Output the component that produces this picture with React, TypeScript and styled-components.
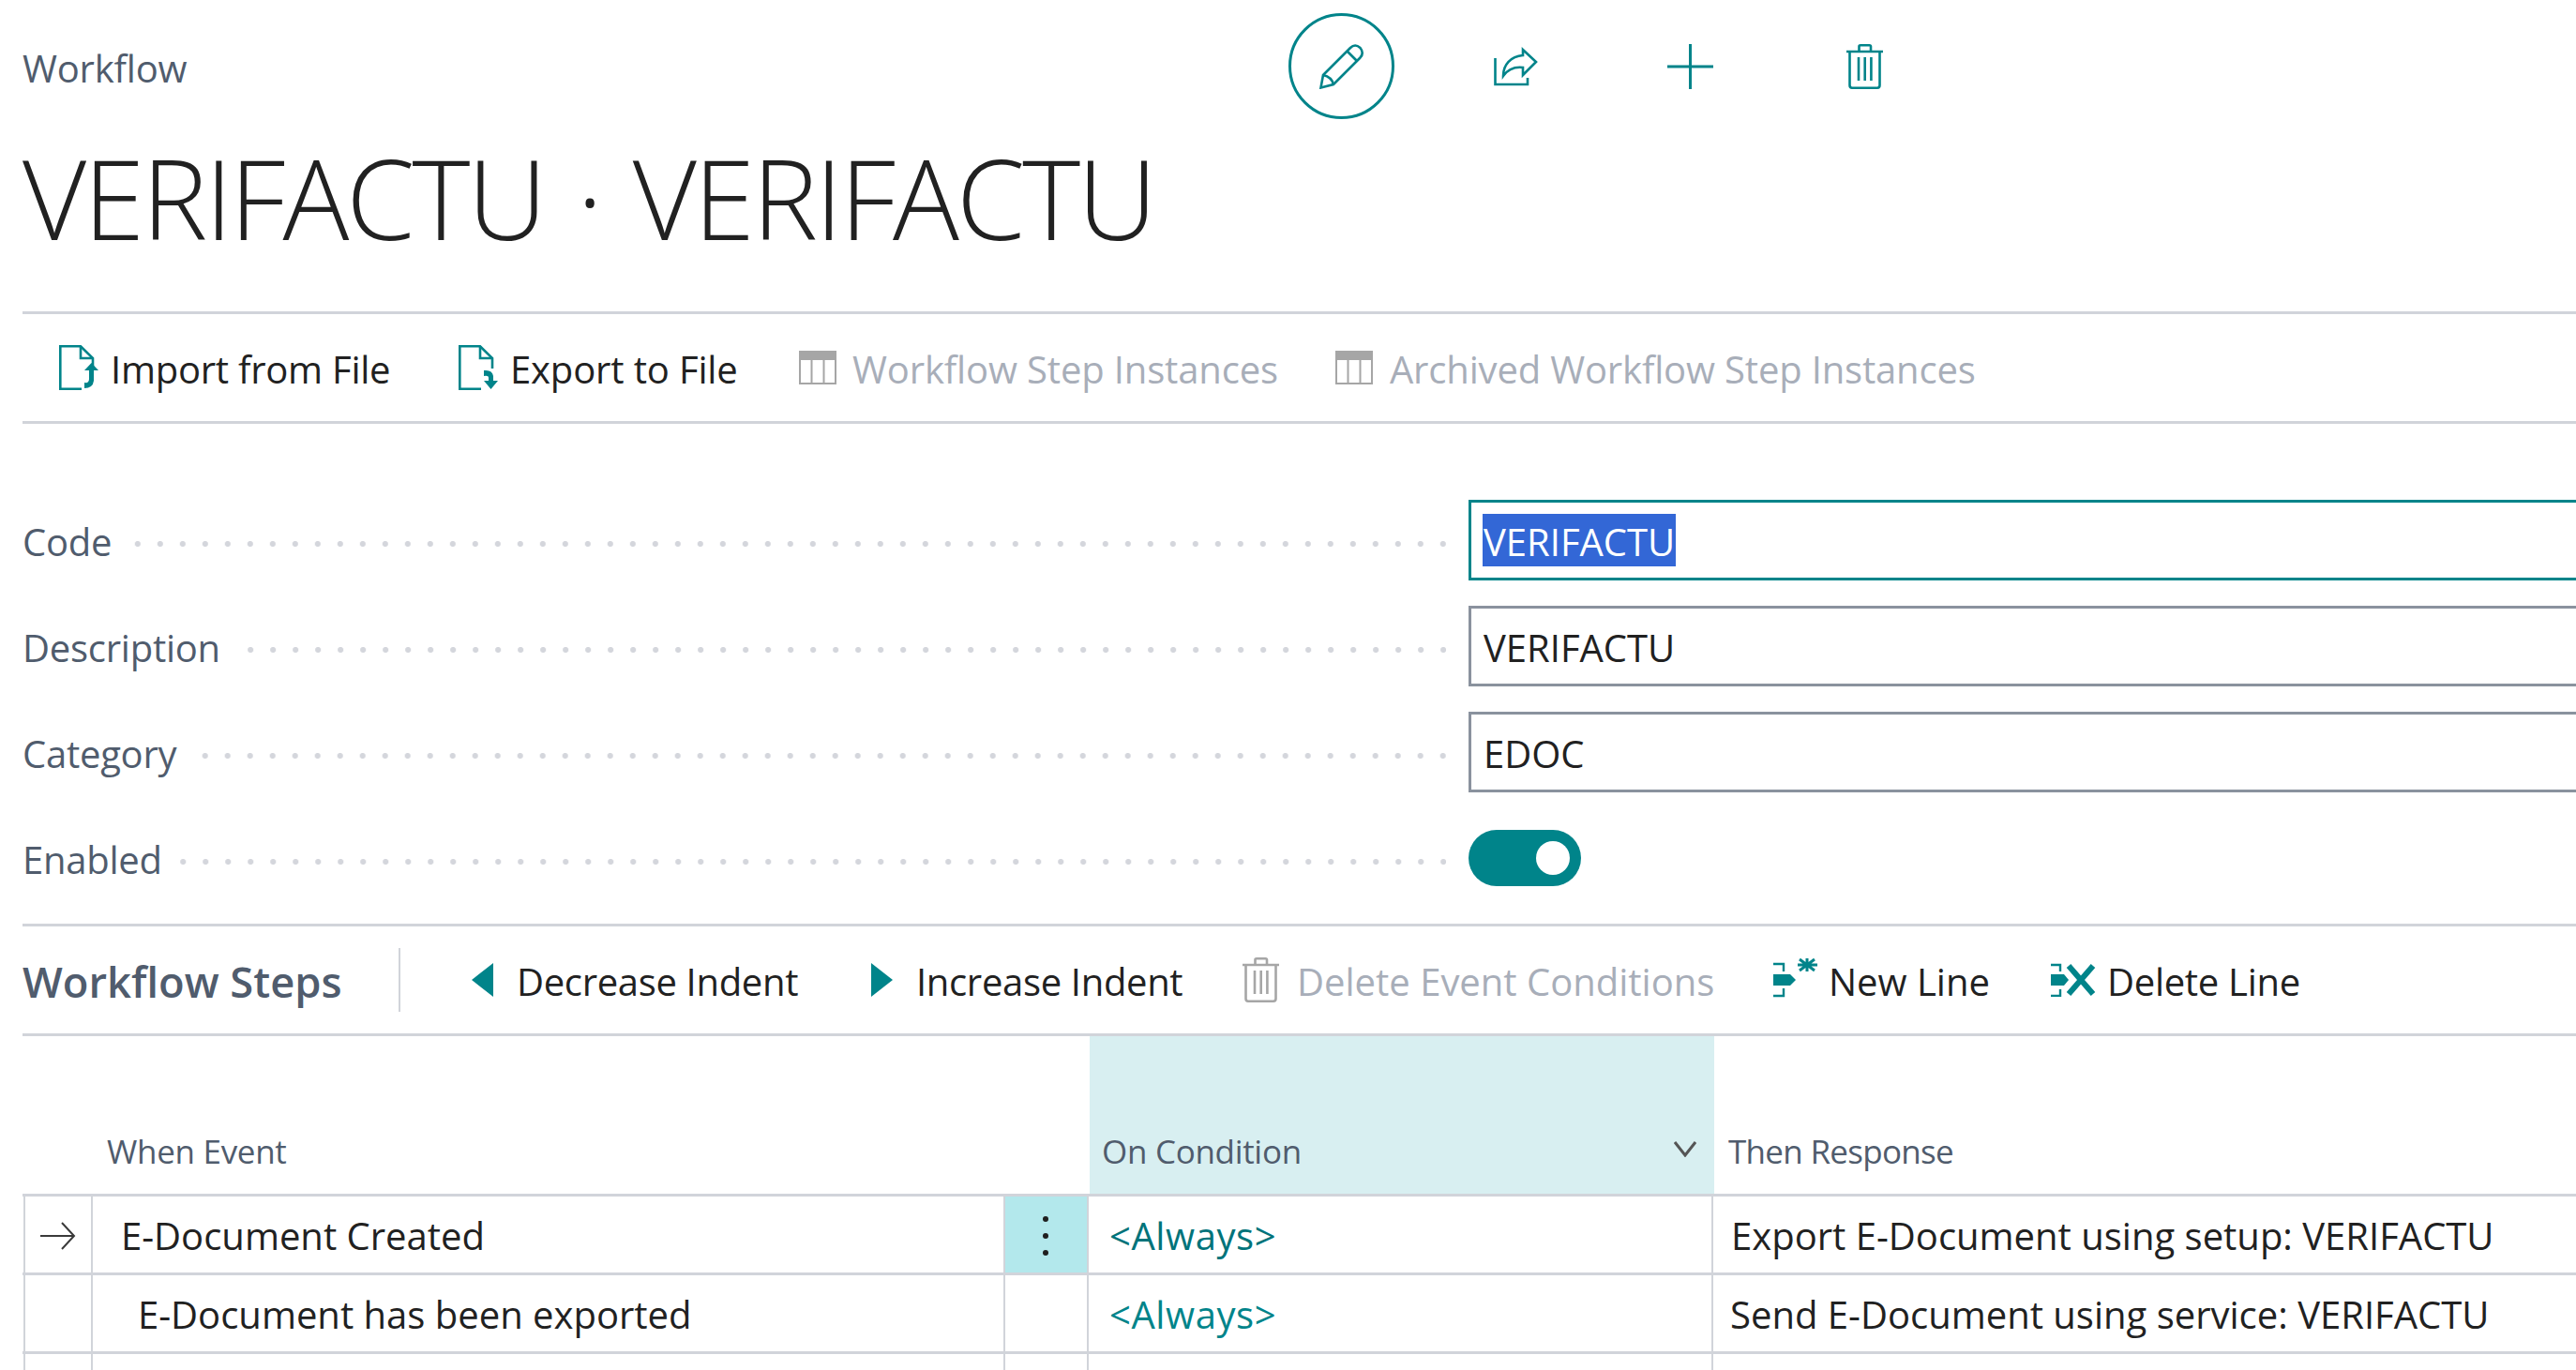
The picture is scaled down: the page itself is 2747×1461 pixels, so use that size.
import * as React from "react"
import styled, { createGlobalStyle } from "styled-components"

const TEAL = "#00848a"
const LINE = "#d1d4da"
const MUTED = "#505c6d"
const INK = "#212121"
const DISABLED = "#a8aeb9"

const GlobalStyle = createGlobalStyle`
  html, body {
    margin: 0;
    padding: 0;
    background: #fff;
  }
  body {
    font-family: "Open Sans", "Noto Sans", sans-serif;
    color: ${INK};
  }
`

const Page = styled.div`
  width: 2747px;
  height: 1461px;
  padding-left: 24px;
  box-sizing: border-box;
  overflow: hidden;
`

const TopRow = styled.div`
  display: flex;
  align-items: center;
  padding-top: 14px;
`

const Caption = styled.div`
  flex: 0 0 1350px;
  font-size: 40px;
  line-height: 54px;
  letter-spacing: -0.2px;
  color: ${MUTED};
  padding-top: 4px;
`

const Actions = styled.div`
  display: flex;
  gap: 73px;
`

const ActionButton = styled.div<{ $ring?: boolean }>`
  width: 113px;
  height: 113px;
  box-sizing: border-box;
  border-radius: 50%;
  border: 3px solid ${({ $ring }) => ($ring ? TEAL : "transparent")};
  display: flex;
  align-items: center;
  justify-content: center;
`

const Title = styled.h1`
  margin: 14px 0 51px;
  font-size: 118px;
  font-weight: 300;
  line-height: 140px;
  letter-spacing: -3px;
  word-spacing: 7px;
  color: ${INK};
`

const Toolbar = styled.div`
  display: flex;
  align-items: center;
  height: 114px;
  border-top: 3px solid ${LINE};
`

const ActionBar = styled(Toolbar)`
  padding-left: 39px;
  border-bottom: 3px solid ${LINE};
`

const StepsBar = styled(Toolbar)``

const ToolItem = styled.div<{ $width?: number; $gap: number; $disabled?: boolean; $spacing?: number }>`
  flex: 0 0 ${({ $width }) => ($width ? `${$width}px` : "auto")};
  display: flex;
  align-items: center;
  gap: ${({ $gap }) => $gap}px;
  font-size: 40px;
  line-height: 54px;
  letter-spacing: ${({ $spacing }) => $spacing ?? 0}px;
  color: ${({ $disabled }) => ($disabled ? DISABLED : INK)};
  white-space: nowrap;
`

const ToolLabel = styled.span`
  margin-top: 4px;
`

const SectionTitle = styled.h2`
  flex: 0 0 401px;
  margin: 0;
  font-size: 45.3px;
  font-weight: 600;
  line-height: 60px;
  color: ${MUTED};
  padding-top: 4px;
  box-sizing: border-box;
`

const Divider = styled.div`
  flex: 0 0 2px;
  height: 68px;
  margin-right: 76px;
  background: ${LINE};
`

const Form = styled.div`
  display: flex;
  flex-direction: column;
  gap: 27px;
  padding: 81px 0 27px;
`

const FormRow = styled.div`
  display: grid;
  grid-template-columns: 1518px 1fr;
  column-gap: 24px;
  height: 86px;
  align-items: center;
`

const LabelCell = styled.div`
  display: flex;
  align-items: center;
`

const Label = styled.div`
  font-size: 40px;
  line-height: 54px;
  letter-spacing: -0.25px;
  color: ${MUTED};
  white-space: nowrap;
  padding-top: 4px;
`

const Leader = styled.div`
  flex: 1;
  height: 6px;
  margin: 8px 0 0 12px;
  background-image: radial-gradient(circle 3px, #d4d6dc 96%, transparent 100%);
  background-size: 24px 6px;
  background-position: right -9px center;
  background-repeat: repeat-x;
`

const Field = styled.div<{ $focused?: boolean }>`
  height: 86px;
  box-sizing: border-box;
  border: 3px solid ${({ $focused }) => ($focused ? TEAL : "#8a929e")};
  border-right: none;
  padding: ${({ $focused }) => ($focused ? "0 0 0 12px" : "3px 0 0 13px")};
  display: flex;
  align-items: center;
  font-size: 40px;
  line-height: 56px;
  color: ${INK};
`

const Selected = styled.span`
  display: inline-block;
  height: 56px;
  line-height: 59px;
  padding: 0 1px;
  background: #3367d6;
  color: #fff;
`

const Toggle = styled.div`
  width: 120px;
  height: 60px;
  border-radius: 30px;
  background: ${TEAL};
  display: flex;
  align-items: center;
  justify-content: flex-end;
  padding-right: 12px;
  box-sizing: border-box;
`

const Knob = styled.div`
  width: 36px;
  height: 36px;
  border-radius: 50%;
  background: #fff;
`

const HeaderRow = styled.div`
  display: grid;
  grid-template-columns: 1136px 668px 1fr;
  height: 168px;
  border-top: 3px solid ${LINE};
  border-bottom: 3px solid ${LINE};
`

const HeaderCell = styled.div<{ $active?: boolean; $pad: number; $spacing?: number }>`
  position: relative;
  display: flex;
  align-items: flex-end;
  padding: 0 0 21px ${({ $pad }) => $pad}px;
  font-size: 35px;
  line-height: 48px;
  letter-spacing: ${({ $spacing }) => $spacing ?? -0.3}px;
  color: ${MUTED};
  border-left: 2px solid transparent;
  background: ${({ $active }) => ($active ? "#d8eff1" : "transparent")};
  background-clip: padding-box;
`

const SortMark = styled.div`
  position: absolute;
  right: 19px;
  bottom: 39px;
  display: flex;
`

const Row = styled.div`
  display: grid;
  grid-template-columns: 72px 973px 89px 666px 1fr;
  height: 81px;
  padding-left: 1px;
  border-bottom: 3px solid ${LINE};
`

const Cell = styled.div<{ $pad?: number; $menu?: boolean; $link?: boolean; $dark?: boolean }>`
  display: flex;
  align-items: center;
  box-sizing: border-box;
  border-left: 2px solid ${LINE};
  padding: 2px 0 0 ${({ $pad }) => $pad ?? 0}px;
  font-size: 40px;
  line-height: 54px;
  letter-spacing: ${({ $link }) => ($link ? 0.6 : 0)}px;
  white-space: nowrap;
  background: ${({ $menu }) => ($menu ? "#b3e8ec" : "transparent")};
  color: ${({ $link, $dark }) => ($link ? ($dark ? "#00737a" : TEAL) : INK)};
`

const RowMark = styled(Cell)`
  justify-content: center;
`

const Kebab = styled.div`
  display: flex;
  flex-direction: column;
  gap: 12px;
  margin: 0 auto;
  transform: translateX(-1px);
`

const KebabDot = styled.span`
  width: 6px;
  height: 6px;
  border-radius: 50%;
  background: #1f1f1f;
`

const PencilIcon = () => (
  <svg width="48" height="48" viewBox="0 0 48 48" fill="none" stroke={TEAL} strokeWidth="2.6">
    <path d="M4 33 L33 4 Q38 -1 43.5 4 Q48 9.5 43.5 14.5 L15 43 L1.5 46.5 Z" />
    <path d="M29.5 7.5 L40 18" />
    <path d="M4 33 Q13 35 15 43" />
  </svg>
)

const ShareIcon = () => (
  <svg width="47" height="42" viewBox="0 0 47 42" fill="none" stroke={TEAL} strokeWidth="2.6">
    <path d="M1.5 12 V40 H36 V33" />
    <path d="M31 3 L45 16 L31 30 L31 22 C22 21 15 24 10 31 C10 19 18 10 31 9 Z" />
  </svg>
)

const PlusIcon = () => (
  <svg width="49" height="48" viewBox="0 0 49 48" fill="none" stroke={TEAL} strokeWidth="3">
    <path d="M24.5 0 V48 M0 24 H49" />
  </svg>
)

const TrashIcon = ({ color = TEAL }: { color?: string }) => (
  <svg width="39" height="48" viewBox="0 0 39 48" fill="none" stroke={color} strokeWidth="2.6">
    <path d="M0 8 H39" />
    <path d="M13.5 7 V2.5 Q13.5 1.3 15 1.3 H24.5 Q26 1.3 26 2.5 V7" />
    <path d="M3.5 8 V44 Q3.5 46.7 6 46.7 H33 Q35.5 46.7 35.5 44 V8" />
    <path d="M13 14 V39 M19.7 14 V39 M26.4 14 V39" />
  </svg>
)

const FileIcon = ({ up }: { up?: boolean }) => (
  <svg width="42" height="48" viewBox="0 0 42 48" fill="none" stroke={TEAL} strokeWidth="2.6">
    <path d="M24 46.7 H1.3 V1.3 H23 L36 14 V25" />
    <path d="M23 1.3 V14 H36" />
    {up ? (
      <path d="M27 27 L34.5 19 L42 27 H37 V38 Q36 46 27 46 L27 40 Q32 41 32 36 V27 Z" fill={TEAL} stroke="none" />
    ) : (
      <path d="M27 27 Q36 26 37 33 V38 H42 L34.5 47 L27 38 H32 V35 Q32 32 27 33 Z" fill={TEAL} stroke="none" />
    )}
  </svg>
)

const ColumnsIcon = () => (
  <svg width="40" height="36" viewBox="0 0 40 36" fill="none" stroke="#a6a6a6" strokeWidth="2">
    <rect x="0" y="0" width="40" height="10" fill="#a6a6a6" stroke="none" />
    <path d="M1 9 V35 H39 V9 M13.5 9 V35 M26.5 9 V35" />
  </svg>
)

const TriangleIcon = ({ flip }: { flip?: boolean }) => (
  <svg width="23" height="36" viewBox="0 0 23 36" fill={TEAL}>
    <path d={flip ? "M0 0 L23 18 L0 36 Z" : "M23 0 L0 18 L23 36 Z"} />
  </svg>
)

const NewLineIcon = () => (
  <svg width="50" height="48" viewBox="0 0 50 48" fill="none" stroke={TEAL} strokeWidth="2.4">
    <path d="M0 7 H11 V15 M0 41 H11 V33" />
    <path d="M0 18 H18 L24 24 L18 30 H0 Z" fill={TEAL} stroke="none" />
    <path d="M36 1 V15 M28 2 L44 14 M44 2 L28 14 M26 8 H47" strokeWidth="3" />
  </svg>
)

const DeleteLineIcon = () => (
  <svg width="48" height="36" viewBox="0 0 48 36" fill="none" stroke={TEAL} strokeWidth="2.4">
    <path d="M0 2 H10 V9 M0 35 H10 V28" />
    <path d="M0 12 H14 L19 18 L14 24 H0 Z" fill={TEAL} stroke="none" />
    <path d="M19 3 L45 33 M45 3 L19 33" strokeWidth="6" />
  </svg>
)

const ArrowIcon = () => (
  <svg width="38" height="30" viewBox="0 0 38 30" fill="none" stroke="#3a3a3a" strokeWidth="2">
    <path d="M0 15 H36 M23 1 L36 15 L23 29" />
  </svg>
)

const ChevronIcon = () => (
  <svg width="24" height="17" viewBox="0 0 24 17" fill="none" stroke="#555" strokeWidth="3">
    <path d="M1 1 L12 15 L23 1" />
  </svg>
)

const App = () => (
  <Page>
    <GlobalStyle />
    <TopRow>
      <Caption>Workflow</Caption>
      <Actions>
        <ActionButton $ring>
          <PencilIcon />
        </ActionButton>
        <ActionButton>
          <ShareIcon />
        </ActionButton>
        <ActionButton>
          <PlusIcon />
        </ActionButton>
        <ActionButton>
          <TrashIcon />
        </ActionButton>
      </Actions>
    </TopRow>
    <Title>VERIFACTU · VERIFACTU</Title>

    <ActionBar>
      <ToolItem $width={426} $gap={13} $spacing={-0.25}>
        <FileIcon up />
        <ToolLabel>Import from File</ToolLabel>
      </ToolItem>
      <ToolItem $width={363} $gap={13} $spacing={-0.15}>
        <FileIcon />
        <ToolLabel>Export to File</ToolLabel>
      </ToolItem>
      <ToolItem $width={572} $gap={17} $disabled $spacing={-0.15}>
        <ColumnsIcon />
        <ToolLabel>Workflow Step Instances</ToolLabel>
      </ToolItem>
      <ToolItem $gap={18} $disabled $spacing={-0.17}>
        <ColumnsIcon />
        <ToolLabel>Archived Workflow Step Instances</ToolLabel>
      </ToolItem>
    </ActionBar>

    <Form>
      <FormRow>
        <LabelCell>
          <Label>Code</Label>
          <Leader />
        </LabelCell>
        <Field $focused>
          <Selected>VERIFACTU</Selected>
        </Field>
      </FormRow>
      <FormRow>
        <LabelCell>
          <Label>Description</Label>
          <Leader />
        </LabelCell>
        <Field>VERIFACTU</Field>
      </FormRow>
      <FormRow>
        <LabelCell>
          <Label>Category</Label>
          <Leader />
        </LabelCell>
        <Field>EDOC</Field>
      </FormRow>
      <FormRow>
        <LabelCell>
          <Label>Enabled</Label>
          <Leader />
        </LabelCell>
        <Toggle>
          <Knob />
        </Toggle>
      </FormRow>
    </Form>

    <StepsBar>
      <SectionTitle>Workflow Steps</SectionTitle>
      <Divider />
      <ToolItem $width={426} $gap={25} $spacing={-0.33}>
        <TriangleIcon />
        <ToolLabel>Decrease Indent</ToolLabel>
      </ToolItem>
      <ToolItem $width={396} $gap={25} $spacing={-0.33}>
        <TriangleIcon flip />
        <ToolLabel>Increase Indent</ToolLabel>
      </ToolItem>
      <ToolItem $width={566} $gap={19} $disabled>
        <TrashIcon color="#a6a6a6" />
        <ToolLabel>Delete Event Conditions</ToolLabel>
      </ToolItem>
      <ToolItem $width={296} $gap={9}>
        <NewLineIcon />
        <ToolLabel>New Line</ToolLabel>
      </ToolItem>
      <ToolItem $gap={12} $spacing={-0.3}>
        <DeleteLineIcon />
        <ToolLabel>Delete Line</ToolLabel>
      </ToolItem>
    </StepsBar>

    <HeaderRow>
      <HeaderCell $pad={88}>When Event</HeaderCell>
      <HeaderCell $active $pad={13}>
        On Condition
        <SortMark>
          <ChevronIcon />
        </SortMark>
      </HeaderCell>
      <HeaderCell $pad={13} $spacing={-0.7}>
        Then Response
      </HeaderCell>
    </HeaderRow>
    <Row>
      <RowMark>
        <ArrowIcon />
      </RowMark>
      <Cell $pad={30}>E-Document Created</Cell>
      <Cell $menu>
        <Kebab>
          <KebabDot />
          <KebabDot />
          <KebabDot />
        </Kebab>
      </Cell>
      <Cell $pad={22} $link $dark>
        &lt;Always&gt;
      </Cell>
      <Cell $pad={19}>Export E-Document using setup: VERIFACTU</Cell>
    </Row>
    <Row>
      <RowMark />
      <Cell $pad={48}>E-Document has been exported</Cell>
      <Cell />
      <Cell $pad={22} $link>
        &lt;Always&gt;
      </Cell>
      <Cell $pad={18}>Send E-Document using service: VERIFACTU</Cell>
    </Row>
    <Row>
      <RowMark />
      <Cell />
      <Cell />
      <Cell />
      <Cell />
    </Row>
  </Page>
)

export default App
